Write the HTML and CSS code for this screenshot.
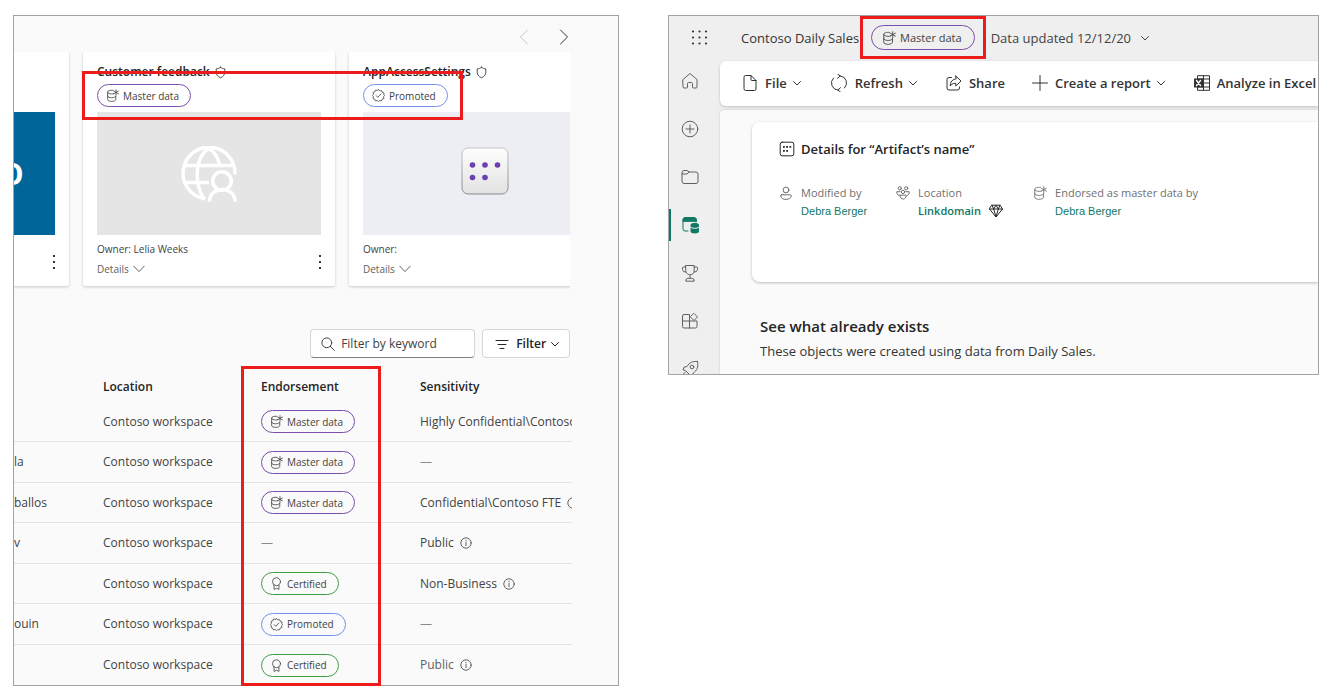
FILE: index.html
```html
<!DOCTYPE html>
<html lang="en">
<head>
<meta charset="utf-8">
<title>Endorsement in the data hub</title>
<link rel="stylesheet" href="styles.css">
</head>
<body>
<svg class="sprite" aria-hidden="true">
  <symbol id="i-master" viewBox="0 0 16 16"><path d="M8.500 1.600C5 1.200 2 2.200 2 3.800s2.600 2.300 5 2.300c1 0 1.700-.1 2.400-.3M2 3.800v9c0 1.500 2.200 2.400 5 2.400s5-.9 5-2.400V9M2 8.600c0 1.300 2.200 2.200 5 2.200s5-.9 5-2.100M12.300.8v6.800M9.300 2.500l6 3.400M15.300 2.500l-6 3.400"/></symbol>
  <symbol id="i-promoted" viewBox="0 0 16 16"><path d="M8 .9l1.700 1.400 2.200-.3.8 2.100 2.100.8-.3 2.200L15.500 8l-1.300 1.500.4 2.200-2.100.8-.8 2.100-2.200-.3L8 15.500l-1.600-1.300-2.200.4-.8-2.100-2.100-.8.400-2.200L.5 8l1.300-1.600-.4-2.200 2.100-.8.800-2.100 2.200.4zM5.200 8.200l2 2 3.700-4"/></symbol>
  <symbol id="i-certified" viewBox="0 0 16 16"><circle cx="8" cy="5.800" r="4.900"/><path d="M5 9.800v5.500l3-1.500 3 1.500V9.800"/></symbol>
  <symbol id="i-shield" viewBox="0 0 16 16"><path d="M8 1.500c1.600 1.300 3.300 1.900 5.300 2v4c0 3.300-2 5.600-5.300 7-3.300-1.400-5.300-3.700-5.300-7v-4c2-.1 3.700-.7 5.300-2z"/></symbol>
  <symbol id="i-down" viewBox="0 0 12 12"><path d="M2.500 4.500L6 8l3.500-3.500"/></symbol>
  <symbol id="i-wide-down" viewBox="0 0 12 12"><path d="M.8 3.200L6 8.600l5.200-5.400"/></symbol>
  <symbol id="i-prev" viewBox="0 0 16 16"><path d="M11.500 1L4.500 8l7 7"/></symbol>
  <symbol id="i-next" viewBox="0 0 16 16"><path d="M4.500 1l7 7-7 7"/></symbol>
  <symbol id="i-more" viewBox="0 0 4 16"><path d="M1 1h2v2H1zM1 7h2v2H1zM1 13h2v2H1z" fill="currentColor" stroke="none"/></symbol>
  <symbol id="i-search" viewBox="0 0 14 14"><circle cx="5.800" cy="5.800" r="4.900"/><path d="M9.300 9.300l4 4"/></symbol>
  <symbol id="i-lines" viewBox="0 0 14 14"><path d="M1 3.500h12M3 7.500h8M5 11.500h4"/></symbol>
  <symbol id="i-info" viewBox="0 0 12 12"><circle cx="6" cy="6" r="5.200"/><path d="M6 5.200v3.500M6 3.200v.4"/></symbol>
</svg>

<main class="page">
  <section class="panel hub" aria-label="Data hub">
    <div class="pager">
      <button class="bare faded" aria-label="Previous"><svg class="ic s16"><use href="#i-prev"/></svg></button>
      <button class="bare dark" aria-label="Next"><svg class="ic s16"><use href="#i-next"/></svg></button>
    </div>

    <div class="carousel">
      <article class="card card-first">
        <div class="card-top"></div>
        <div class="thumb thumb-blue">o</div>
        <div class="card-foot"><div class="card-info"></div>
          <button class="bare dark" aria-label="More options"><svg class="ic more"><use href="#i-more"/></svg></button></div>
      </article>
      <article class="card">
        <div class="card-top">
          <h3 class="card-title">Customer feedback <svg class="ic s13"><use href="#i-shield"/></svg></h3>
          <span class="badge master"><svg class="ic s13"><use href="#i-master"/></svg>Master data</span>
        </div>
        <div class="thumb thumb-grey">
          <svg class="globe" viewBox="0 0 56 56"><path d="M54 28.500A26 26 0 1 0 24.500 53M3.500 19.500h48M3.500 36.500H28M22.500 52C12.500 36 14.500 10 28 2.500 34 6 37.500 12 38.500 20" /><circle cx="41" cy="35" r="9.300"/><path d="M28.500 55.500c0-16 25.500-16 25.500 0"/></svg>
        </div>
        <div class="card-foot">
          <div class="card-info"><span>Owner: Lelia Weeks</span><button class="bare details">Details <svg class="ic s12"><use href="#i-wide-down"/></svg></button></div>
          <button class="bare dark" aria-label="More options"><svg class="ic more"><use href="#i-more"/></svg></button>
        </div>
      </article>
      <article class="card card-wide">
        <div class="card-top">
          <h3 class="card-title">AppAccessSettings <svg class="ic s13"><use href="#i-shield"/></svg></h3>
          <span class="badge promoted"><svg class="ic s13"><use href="#i-promoted"/></svg>Promoted</span>
        </div>
        <div class="thumb thumb-lilac"><svg class="app" viewBox="0 0 48 48">
          <defs><linearGradient id="tile" x1="0" y1="0" x2="0" y2="1"><stop offset="0" stop-color="#fefefe"/><stop offset="1" stop-color="#e2e2e2"/></linearGradient><linearGradient id="edge" x1="0" y1="0" x2="0" y2="1"><stop offset="0" stop-color="#c4c4c4"/><stop offset="1" stop-color="#8a8a8a"/></linearGradient></defs>
          <rect x="1" y="1" width="46" height="46" rx="6" fill="url(#tile)" stroke="url(#edge)"/>
          <g fill="#6a3fb0"><circle cx="11.500" cy="18" r="2.800"/><circle cx="24" cy="18" r="2.800"/><circle cx="36.500" cy="18" r="2.800"/><circle cx="11.500" cy="30.500" r="2.800"/><circle cx="24" cy="30.500" r="2.800"/></g></svg></div>
        <div class="card-foot">
          <div class="card-info"><span>Owner:</span><button class="bare details">Details <svg class="ic s12"><use href="#i-wide-down"/></svg></button></div>
        </div>
      </article>
    </div>

    <div class="filters">
      <label class="search"><svg class="ic s14"><use href="#i-search"/></svg><input type="search" placeholder="Filter by keyword" aria-label="Filter by keyword"></label>
      <button class="filter"><svg class="ic s14"><use href="#i-lines"/></svg>Filter<svg class="ic s12"><use href="#i-down"/></svg></button>
    </div>

    <table class="items">
      <colgroup><col class="c-owner"><col class="c-loc"><col class="c-end"><col></colgroup>
      <thead><tr><td></td><th scope="col">Location</th><th scope="col">Endorsement</th><th scope="col">Sensitivity</th></tr></thead>
      <tbody>
        <tr><td></td><td>Contoso workspace</td><td><span class="badge master"><svg class="ic s13"><use href="#i-master"/></svg>Master data</span></td><td>Highly Confidential\Contoso</td></tr>
        <tr><td>la</td><td>Contoso workspace</td><td><span class="badge master"><svg class="ic s13"><use href="#i-master"/></svg>Master data</span></td><td><span class="dash">—</span></td></tr>
        <tr><td>ballos</td><td>Contoso workspace</td><td><span class="badge master"><svg class="ic s13"><use href="#i-master"/></svg>Master data</span></td><td>Confidential\Contoso FTE <svg class="ic s12 info"><use href="#i-info"/></svg></td></tr>
        <tr><td>v</td><td>Contoso workspace</td><td><span class="dash">—</span></td><td>Public <svg class="ic s12 info"><use href="#i-info"/></svg></td></tr>
        <tr><td></td><td>Contoso workspace</td><td><span class="badge certified"><svg class="ic s13"><use href="#i-certified"/></svg>Certified</span></td><td>Non-Business <svg class="ic s12 info"><use href="#i-info"/></svg></td></tr>
        <tr><td>ouin</td><td>Contoso workspace</td><td><span class="badge promoted"><svg class="ic s13"><use href="#i-promoted"/></svg>Promoted</span></td><td><span class="dash">—</span></td></tr>
        <tr><td></td><td>Contoso workspace</td><td><span class="badge certified"><svg class="ic s13"><use href="#i-certified"/></svg>Certified</span></td><td class="muted">Public <svg class="ic s12 info"><use href="#i-info"/></svg></td></tr>
      </tbody>
    </table>
    <div class="mark mark-cards"></div>
    <div class="mark mark-column"></div>
  </section>

  <section class="panel report" aria-label="Contoso Daily Sales">
    <header class="top">
      <button class="bare dark launcher" aria-label="App launcher"><svg class="ic s18" viewBox="0 0 18 18"><g fill="currentColor" stroke="none"><circle cx="3" cy="2.500" r="1.100"/><circle cx="9.500" cy="2.500" r="1.100"/><circle cx="16" cy="2.500" r="1.100"/><circle cx="3" cy="8.500" r="1.100"/><circle cx="9.500" cy="8.500" r="1.100"/><circle cx="16" cy="8.500" r="1.100"/><circle cx="3" cy="14.500" r="1.100"/><circle cx="9.500" cy="14.500" r="1.100"/><circle cx="16" cy="14.500" r="1.100"/></g></svg></button>
      <h1 class="title">Contoso Daily Sales</h1>
      <span class="badge master large"><svg class="ic s14"><use href="#i-master"/></svg>Master data</span>
      <button class="bare updated">Data updated 12/12/20 <svg class="ic s12"><use href="#i-down"/></svg></button>
    </header>
    <div class="body">
      <nav class="rail" aria-label="Main">
        <a href="#" aria-label="Home"><svg class="ic s18" viewBox="0 0 18 18"><path d="M2 7.500L9 1.500l7 6V15q0 1-1 1h-2.500q-1 0-1-1v-3.500q0-1-1-1h-3q-1 0-1 1V15q0 1-1 1H3q-1 0-1-1z"/></svg></a>
        <a href="#" aria-label="Create"><svg class="ic s18" viewBox="0 0 18 18"><circle cx="9" cy="9" r="7.800"/><path d="M9 5v8M5 9h8"/></svg></a>
        <a href="#" aria-label="Browse"><svg class="ic s18" viewBox="0 0 18 18"><path d="M1 4.500q0-2 2-2h3l2 1.500h7q2 0 2 2V13.500q0 2-2 2H3q-2 0-2-2zM1 6h5l2-2"/></svg></a>
        <a href="#" class="active" aria-label="Data hub"><svg class="ic s18" viewBox="0 0 18 18"><path d="M7 15H4q-2 0-2-2V3.500h13V6"/><path d="M2 5V3.500q0-2 2-2h9q2.500 0 2.500 2.500V5z" fill="currentColor"/><path d="M9.500 9c0-2.600 8.500-2.600 8.500 0v6.500c0 2.600-8.500 2.600-8.500 0z" fill="currentColor" stroke="none"/><path d="M9.300 11.200c2 1.600 6.800 1.600 8.900 0" stroke="#efefef"/></svg></a>
        <a href="#" aria-label="Goals"><svg class="ic s18" viewBox="0 0 18 18"><path d="M4.800 1.500h8.400V7c0 5-8.400 5-8.400 0zM4.800 3H2.500Q1.500 3 1.500 4v1.500q0 2.500 3.500 2.700M13.200 3h2.300q1 0 1 1v1.500q0 2.500-3.500 2.700M9 11v3M4.800 16.800q0-2.500 2-2.500h4.400q2 0 2 2.500z"/></svg></a>
        <a href="#" aria-label="Apps"><svg class="ic s18" viewBox="0 0 18 18"><path d="M8.500 9H1.500V4q0-1.500 1.500-1.500h5.500V16M8.500 9H16v5.500q0 1.500-1.500 1.500H3q-1.500 0-1.500-1.500V9M13 1.500l3.500 3.500L13 8.500 9.500 5z"/></svg></a>
        <a href="#" aria-label="Deployment pipelines"><svg class="ic s18" viewBox="0 0 18 18"><path d="M16.500 1.500c-5-.5-8 1-10.500 5l-3 .7L2 10l2.500.5 4 4L9 17l2.500-1 .7-3c4-2.500 5.300-6 4.300-11.500zM4.500 12l-3 3M6.500 14l-3 3"/><circle cx="11" cy="7" r="1.800"/></svg></a>
      </nav>
      <div class="workspace">
        <div class="toolbar">
          <button class="tool"><svg class="ic s16" viewBox="0 0 16 16"><path d="M2 2q0-1.500 1.500-1.500H9L14 5.500V14q0 1.500-1.500 1.500h-9Q2 15.500 2 14zM9 .5v4q0 1 1 1h4"/></svg>File<svg class="ic s12"><use href="#i-down"/></svg></button>
          <button class="tool"><svg class="ic s18" viewBox="0 0 18 18"><path d="M10 1.800A7.200 7.200 0 0 1 14.500 14M8 16.200A7.200 7.200 0 0 1 3.500 4M7.500 0l2.700 2-2.700 2.300M10.500 18l-2.700-2 2.700-2.300"/></svg>Refresh<svg class="ic s12"><use href="#i-down"/></svg></button>
          <button class="tool"><svg class="ic s16" viewBox="0 0 16 16"><path d="M5.500 2.500H3q-2 0-2 2V13q0 2 2 2h8.500q2 0 2-2v-1M9.800 1l5.200 5-5.200 5V8.300C7 8.300 5.500 9 4.200 11c0-4 2-6.700 5.600-7.200z"/></svg>Share</button>
          <button class="tool"><svg class="ic s16" viewBox="0 0 16 16"><path d="M8 .5v15M.5 8h15"/></svg>Create a report<svg class="ic s12"><use href="#i-down"/></svg></button>
          <button class="tool"><svg class="ic s16" viewBox="0 0 16 16"><path d="M3.500 4V.7h12v14.600h-12V12M9.500.7v14.600M3.500 4h12M9 8h6.500M3.500 12h12"/><path d="M0 3.500h9v9H0z" fill="currentColor" stroke="none"/><path d="M2.500 5.500l4 5M6.500 5.500l-4 5" stroke="#fff" stroke-width="1.400"/></svg>Analyze in Excel</button>
        </div>
        <div class="content">
          <section class="info-card">
            <h2 class="info-title"><svg class="ic s16" viewBox="0 0 16 16"><rect x="1.200" y="1.200" width="13.600" height="13.600" rx="2"/><g fill="currentColor" stroke="none"><path d="M4 5h1.800v1.800H4zM7.200 5H9v1.800H7.200zM10.400 5h1.800v1.800h-1.800zM4 9h1.800v1.800H4zM7.200 9H9v1.800H7.200z"/></g></svg>Details for “Artifact’s name”</h2>
            <div class="facts">
              <div class="fact"><svg class="ic s14" viewBox="0 0 14 14"><circle cx="7" cy="4" r="2.900"/><path d="M2.500 8.800h9q.8 0 .8 1c0 4.800-10.600 4.800-10.600 0q0-1 .8-1z"/></svg><span class="label">Modified by</span><a class="person" href="#">Debra Berger</a></div>
              <div class="fact"><svg class="ic s14" viewBox="0 0 14 14"><circle cx="3.800" cy="2.300" r="1.600"/><circle cx="10.200" cy="2.300" r="1.600"/><circle cx="7" cy="5.900" r="1.700"/><path d="M4 9.200h6.200c0 5.200-6.300 5.200-6.300 0zM4.200 5.700H.8c0 2 .6 3.300 2 3.800M9.800 5.700h3.400c0 2-.6 3.300-2 3.800"/></svg><span class="label">Location</span><span class="place"><a href="#">Linkdomain</a><svg class="ic s14 gem" viewBox="0 0 14 14"><path d="M3 1.200h8L13.500 5 7 13 .5 5zM.5 5h13M3 1.200L4.700 5 7 13l2.300-8L11 1.200M4.700 5L7 1.200 9.300 5"/></svg></span></div>
              <div class="fact"><svg class="ic s14"><use href="#i-master"/></svg><span class="label">Endorsed as master data by</span><a class="person" href="#">Debra Berger</a></div>
            </div>
          </section>
          <h2 class="section-title">See what already exists</h2>
          <p class="section-text">These objects were created using data from Daily Sales.</p>
        </div>
      </div>
    </div>
    <div class="mark mark-badge"></div>
  </section>
</main>
</body>
</html>
```
FILE: styles.css
```css
* { box-sizing: border-box; }
body { margin: 0; background: #fff; color: #424242; font: 13px/18px "Open Sans", "Noto Sans", sans-serif; }
h1, h2, h3, p { margin: 0; }
button { font: inherit; color: inherit; cursor: pointer; }
a { text-decoration: none; }
.sprite { position: absolute; width: 0; height: 0; }

.page { display: flex; align-items: flex-start; gap: 49px; padding: 15px 20px 14px 13px; }
.panel { position: relative; min-width: 0; border: 1px solid #a3a3a3; background: #fafafa; }
.hub { flex: 606 1 0; }
.report { flex: 651 1 0; background: #efefef; overflow: hidden; }

.ic { flex: none; fill: none; stroke: currentColor; stroke-width: 1; stroke-linejoin: round; stroke-linecap: round; }
.s12 { width: 12px; height: 12px; }
.s13 { width: 13px; height: 13px; }
.s14 { width: 14px; height: 14px; }
.s16 { width: 16px; height: 16px; }
.s18 { width: 18px; height: 18px; }
.bare { display: inline-flex; align-items: center; padding: 0; border: 0; background: none; }
.dark { color: #333; }
.faded { color: #c4c4c4; }
.mark { position: absolute; border: 3px solid #ec1c1c; pointer-events: none; }
.mark-cards { left: 68px; top: 55px; width: 381px; height: 49px; }
.mark-column { left: 227px; top: 350px; width: 140px; bottom: -1px; }
.mark-badge { left: 191px; top: 0; width: 126px; height: 43px; }

.badge { display: inline-flex; align-items: center; gap: 4px; height: 23px; padding: 0 11px 0 8px; border: 1px solid; border-radius: 12px; font-size: 10px; line-height: 16px; white-space: nowrap; vertical-align: middle; }
.badge .ic { color: #424242; }
.master { border-color: #7c4fae; }
.promoted { border-color: #7690f0; }
.certified { border-color: #3f9e45; }
.badge.large { height: 25px; padding: 0 12px 0 10px; border-radius: 13px; font-size: 11px; }

.pager { display: flex; justify-content: flex-end; align-items: center; gap: 24px; height: 36px; padding: 6px 46px 0 0; }
.carousel { display: flex; gap: 14px; margin-right: 48px; padding-bottom: 8px; overflow: hidden; }
.card { flex: none; width: 252px; padding: 10px 14px 9px; background: #fff; border-radius: 2px; box-shadow: 0 1px 3px rgba(0, 0, 0, .2); }
.card-first { margin-left: -197px; }
.card-wide { width: 272px; }
.card-top { display: flex; flex-direction: column; align-items: flex-start; gap: 2px; height: 50px; }
.card-title { display: flex; align-items: center; gap: 4px; color: #242424; font-size: 12px; line-height: 20px; font-weight: 600; }
.thumb { display: flex; align-items: center; justify-content: center; height: 123px; }
.thumb-blue { justify-content: flex-end; padding: 0 31px 8px 0; background: #006699; color: #fff; font-size: 40px; line-height: 48px; font-weight: 600; }
.thumb-grey { background: #e5e5e5; }
.thumb-lilac { padding-bottom: 6px; background: #edeef4; }
.globe { width: 56px; height: 56px; fill: none; stroke: #fff; stroke-width: 3.500; }
.app { width: 48px; height: 48px; }
.card-foot { display: flex; justify-content: space-between; align-items: center; height: 42px; padding-top: 6px; font-size: 10px; }
.card-info { display: flex; flex-direction: column; align-items: flex-start; gap: 2px; }
.details { gap: 4px; color: #616161; }
.more { width: 4px; height: 16px; }
.card-foot > .bare { margin: 6px -1px 0 0; }

.filters { display: flex; justify-content: flex-end; gap: 7px; margin: 35px 48px 0 0; }
.search { display: flex; align-items: center; gap: 6px; width: 165px; height: 29px; padding: 0 10px; border: 1px solid #d6d6d6; border-bottom-color: #808080; border-radius: 4px; background: #fff; }
.search input { flex: 1; min-width: 0; padding: 0; border: 0; outline: 0; background: none; color: #424242; font: 12px/18px "Open Sans", "Noto Sans", sans-serif; }
.search input::placeholder { color: #424242; opacity: 1; }
.filter { display: flex; align-items: center; gap: 7px; height: 29px; padding: 0 8px 0 12px; border: 1px solid #d6d6d6; border-radius: 4px; background: #fff; color: #242424; font-size: 12px; font-weight: 600; }
.filter .s12 { margin-left: -4px; }

.items { width: calc(100% - 46px); margin-top: 14px; table-layout: fixed; border-collapse: separate; border-spacing: 0; font-size: 12px; }
.c-owner { width: 89px; }
.c-loc { width: 158px; }
.c-end { width: 159px; }
.items td, .items th { height: 40px; padding: 0; text-align: left; white-space: nowrap; vertical-align: middle; }
.items td:last-child { overflow: hidden; }
.items thead td, .items thead th { height: 30px; color: #242424; font-weight: 600; }
.items tbody tr:nth-child(even) td { height: 41px; }
.items tbody td { border-bottom: 1px solid #e3e3e3; }
.items tbody tr:last-child td { border-bottom: 0; }
.info { margin-left: 3px; vertical-align: -2px; color: #616161; }
.dash { color: #8a8a8a; }
.items .muted { color: #616161; }

.top { display: flex; align-items: center; height: 44px; padding: 0 0 1px 21px; white-space: nowrap; }
.title { flex: none; width: 121px; margin-left: 33px; color: #333; font-size: 13px; font-weight: 400; overflow: hidden; }
.top .badge { margin-left: 9px; }
.updated { gap: 8px; margin-left: 16px; }
.body { display: flex; align-items: flex-start; }
.rail { flex: none; display: flex; flex-direction: column; gap: 16px; width: 51px; margin-bottom: -11px; padding-top: 5px; }
.rail a { display: flex; align-items: center; justify-content: center; height: 32px; padding-right: 12px; border-left: 2px solid transparent; color: #616161; }
.rail .active { border-color: #117865; color: #117865; }
.workspace { flex: 1; min-width: 0; align-self: stretch; display: flex; flex-direction: column; gap: 4px; padding-top: 1px; }
.toolbar { display: flex; align-items: center; gap: 27px; height: 45px; padding: 0 0 2px 22px; overflow: hidden; border-radius: 6px 0 0 6px; background: #fff; box-shadow: 0 1px 3px rgba(0, 0, 0, .2); }
.tool { flex: none; display: flex; align-items: center; gap: 7px; padding: 0; border: 0; background: none; color: #333; font-weight: 600; white-space: nowrap; }
.tool .s12 { margin-left: -3px; }
.content { flex: 1; padding: 12px 0 12px 32px; border-radius: 4px 0 0 0; background: #fafafa; box-shadow: 0 0 2px rgba(0, 0, 0, .2); }
.info-card { height: 160px; padding: 16px 27px; border-radius: 8px 0 0 8px; background: #fff; box-shadow: 0 1px 3px rgba(0, 0, 0, .25); }
.info-title { display: flex; align-items: center; gap: 6px; color: #242424; font-size: 13px; line-height: 22px; font-weight: 600; }
.facts { display: grid; grid-template-columns: 117px 137px auto; margin-top: 24px; }
.fact { display: grid; grid-template-columns: 14px auto; justify-content: start; align-items: center; column-gap: 8px; color: #707070; font-size: 11px; white-space: nowrap; }
.person, .place { grid-column: 2; color: #117865; }
.person { font: 11px/18px "Liberation Sans", Arial, sans-serif; }
.place { display: flex; align-items: center; gap: 8px; }
.place a { color: inherit; font-weight: 600; }
.gem { color: #242424; }
.section-title { margin: 33px 0 0 8px; color: #242424; font-size: 15px; line-height: 22px; font-weight: 600; }
.section-text { margin: 5px 0 0 8px; color: #333; font-size: 13px; }
```
